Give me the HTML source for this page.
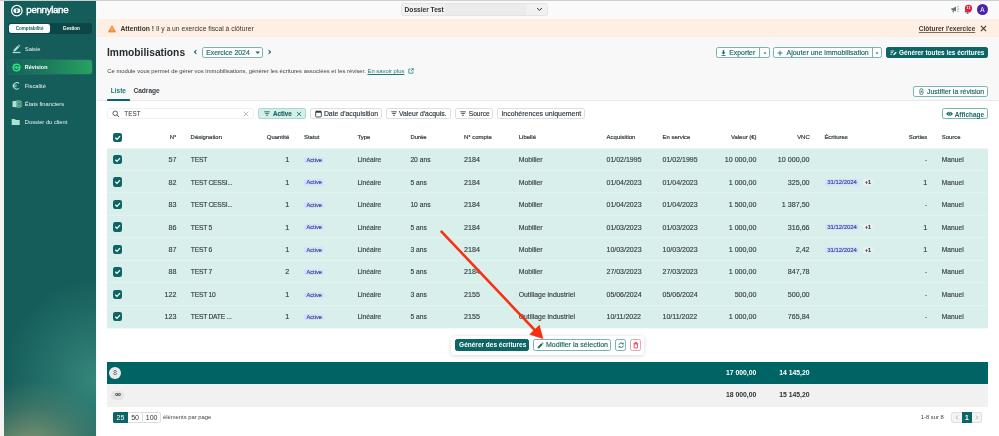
<!DOCTYPE html>
<html lang="fr">
<head>
<meta charset="utf-8">
<title>Immobilisations</title>
<style>
*{box-sizing:border-box;margin:0;padding:0}
html,body{width:999px;height:436px;overflow:hidden;background:#fff}
body{font-family:"Liberation Sans",sans-serif;color:#2b3338;position:relative;font-size:6.7px;-webkit-font-smoothing:antialiased}
.abs{position:absolute}
.t{position:absolute;white-space:nowrap;line-height:10px;height:10px}
.r{text-align:right}
/* frame */
#topline{left:0;top:0;width:999px;height:1px;background:#cfcfcf}
#leftstrip{left:0;top:1px;width:4px;height:435px;background:#f3f3f3}
#side{left:4px;top:1px;width:92.2px;height:435px;background:radial-gradient(ellipse 82px 78px at 30% 105%, rgba(130,150,114,0.97) 0%, rgba(124,147,112,0.8) 30%, rgba(115,142,110,0.35) 65%, rgba(110,140,110,0) 100%),radial-gradient(ellipse 92px 100px at 100% 87%, rgba(56,138,126,0.92) 0%, rgba(52,132,121,0.62) 40%, rgba(48,126,116,0) 100%),#155d5b}
#sidegap{left:96.2px;top:1px;width:1.2px;height:435px;background:#f3f5f5}
#topbar{left:97.4px;top:1px;width:901.6px;height:18px;background:#fafafa}
#banner{left:97.4px;top:18.7px;width:901.6px;height:18.6px;background:#fdefe3}
#head{left:97.4px;top:37.3px;width:901.6px;height:63px;background:#f8f8f8}
#headline{left:97.4px;top:100px;width:901.6px;height:0.8px;background:#e8e9ea}
/* sidebar */
.nav{position:absolute;left:24.8px;color:#e8f3f0;font-size:5.75px;line-height:10px;height:10px;white-space:nowrap}
#toggle{left:8.1px;top:23.2px;width:84.2px;height:10.6px;background:#0c4646;border-radius:2.5px}
#tg1{left:8.9px;top:24.2px;width:41.3px;height:8.9px;background:#fff;border-radius:2.2px;color:#155d5c;font-size:4.6px;font-weight:bold;text-align:center;line-height:9px}
#tg2{left:50.4px;top:24.2px;width:42px;height:8.9px;color:#fff;font-size:4.6px;font-weight:bold;text-align:center;line-height:9px}
#active{left:8.1px;top:60.2px;width:84.2px;height:14.1px;border-radius:2.5px;background:linear-gradient(90deg,#16625b 0%,#1b7a5c 45%,#27a162 100%);box-shadow:0 0 0 0.4px rgba(255,255,255,.12)}
/* buttons */
.btn{position:absolute;border:0.7px solid #78b5b2;border-radius:2.2px;background:#fff;color:#1b6867;font-size:6.9px;line-height:9px;white-space:nowrap;-webkit-text-stroke:0.16px currentColor}
.btn span{position:absolute;top:0.2px;white-space:nowrap}
.fbtn{position:absolute;-webkit-text-stroke:0.14px currentColor;border:0.8px solid #dcdfe1;border-radius:2px;background:#fff;color:#2b3338;font-size:6.9px;white-space:nowrap;height:11.6px;top:107.8px}
.fbtn span{position:absolute;top:0.6px;line-height:9px;white-space:nowrap}
/* table */
.hd{position:absolute;top:132.4px;font-size:5.95px;color:#3a4349;line-height:10px;white-space:nowrap;-webkit-text-stroke:0.22px #3a4349}
.row{position:absolute;left:107.4px;width:880.4px;height:22.45px;background:#d9efeb;border-bottom:0.7px solid #e1f3f0}
.row div{position:absolute;top:6.7px;line-height:10px;height:10px;white-space:nowrap;color:#333c41;font-size:6.7px;-webkit-text-stroke:0.14px #333c41}
.row div.num{font-size:7.15px}
.row div.date{font-size:7px}
.row div.des{letter-spacing:-0.22px}
.row div.lib{font-size:6.85px}
.row.last{border-bottom-color:#d9efeb;height:22.7px}
.cb{position:absolute;left:5.4px;top:6.5px !important;width:9.2px;height:9.4px !important;background:#0d6565;border-radius:2.2px}
.cb svg{position:absolute;left:0;top:0}
.badge{background:#d6e0fb;color:#2f49c5 !important;font-size:5.6px !important;-webkit-text-stroke:0.18px #2f49c5;border-radius:2.6px;padding:0 2.4px;line-height:6.4px !important;height:6.2px !important;top:8.4px !important}
.plus{background:#eceef0;color:#3a4349 !important;font-weight:bold;font-size:5.4px !important;border-radius:2.6px;padding:0 1.9px;line-height:6.4px !important;height:6.2px !important;top:8.4px !important}
</style>
</head>
<body>
<div id="wrap" style="position:absolute;left:0;top:0;width:999px;height:436px;will-change:transform">
<div class="abs" id="topline"></div>
<div class="abs" id="leftstrip"></div>
<div class="abs" id="side"></div>
<div class="abs" id="sidegap"></div>
<div class="abs" id="topbar"></div>
<div class="abs" id="banner"></div>
<div class="abs" id="head"></div>
<div class="abs" id="headline"></div>

<!-- SIDEBAR -->
<svg class="abs" style="left:10px;top:3.5px" width="14" height="14" viewBox="0 0 14 14">
  <circle cx="6.85" cy="6.7" r="5.25" fill="none" stroke="#fff" stroke-width="1.25"/>
  <ellipse cx="6.85" cy="6.7" rx="3.5" ry="2.35" fill="#fff"/>
  <rect x="6.2" y="4.9" width="1.3" height="3.6" rx="0.65" fill="#155d5c"/>
</svg>
<div class="t" style="left:26.3px;top:4.6px;color:#fff;font-size:9.8px;letter-spacing:-0.36px;-webkit-text-stroke:0.4px #fff" id="logo">pennylane</div>
<div class="abs" id="toggle"></div>
<div class="abs" id="tg1">Comptabilité</div>
<div class="abs" id="tg2">Gestion</div>

<div class="abs" id="active"></div>
<!-- saisie icon -->
<svg class="abs" style="left:11.8px;top:44.2px" width="10" height="10" viewBox="0 0 10 10">
  <path d="M1.7 5.7 L5.6 1.8 L7.1 3.3 L3.2 7.2 L1.4 7.5 Z" fill="#a9e4d0"/>
  <path d="M6.1 1.3 L6.8 0.6 L8.3 2.1 L7.6 2.8 Z" fill="#a9e4d0"/>
  <rect x="0.6" y="7.9" width="7.8" height="1.2" fill="#a9e4d0"/>
</svg>
<div class="nav" style="top:43.8px">Saisie</div>
<!-- revision icon -->
<svg class="abs" style="left:11.75px;top:62.9px" width="9" height="9" viewBox="0 0 9 9">
  <circle cx="4.5" cy="4.5" r="4.05" fill="#2fe47a"/>
  <path d="M2.5 4.3 A2.05 2.05 0 0 1 6 3.1 M6.5 4.7 A2.05 2.05 0 0 1 3 5.9" fill="none" stroke="#0f5a50" stroke-width="1"/>
  <path d="M6.8 1.9 L6.6 3.8 L4.9 3.4 Z M2.2 7.1 L2.4 5.2 L4.1 5.6 Z" fill="#0f5a50"/>
</svg>
<div class="nav" style="top:62.3px;color:#fff;font-weight:bold;font-size:5.45px">Révision</div>
<!-- fiscalite icon -->
<svg class="abs" style="left:12.2px;top:82px" width="8" height="8" viewBox="0 0 8 8"><path d="M6.9 1.5 A3.2 3.2 0 1 0 6.9 6.3" fill="none" stroke="#a9e4d0" stroke-width="1.05"/><path d="M0.5 3.1 H4.8 M0.5 4.7 H4.4" stroke="#a9e4d0" stroke-width="0.85"/></svg>
<div class="nav" style="top:80.5px">Fiscalité</div>
<!-- etats icon -->
<svg class="abs" style="left:11.6px;top:99.4px" width="10" height="10" viewBox="0 0 10 10">
  <path d="M0.5 2.3 L4.6 1.7 V8.3 L0.5 7.9 Z" fill="#a9e4d0"/>
  <path d="M5.2 1.7 L9 2.3 V7.9 L5.2 8.3 Z" fill="none" stroke="#a9e4d0" stroke-width="0.75"/>
  <rect x="6.1" y="3.3" width="2" height="0.65" fill="#a9e4d0"/><rect x="6.1" y="4.7" width="2" height="0.65" fill="#a9e4d0"/><rect x="6.1" y="6.1" width="2" height="0.65" fill="#a9e4d0"/>
</svg>
<div class="nav" style="top:98.8px">États financiers</div>
<!-- dossier icon -->
<svg class="abs" style="left:11.4px;top:117.4px" width="10" height="10" viewBox="0 0 10 10">
  <path d="M0.7 2 H3.9 L4.8 2.9 H8.7 V8 H0.7 Z" fill="#a9e4d0"/>
</svg>
<div class="nav" style="top:117.4px">Dossier du client</div>

<!-- TOPBAR -->
<div class="abs" style="left:400.5px;top:3.4px;width:147.5px;height:12.3px;background:#f1f1f1;border:0.6px solid #e4e4e4;border-radius:2.5px"></div>
<div class="abs" style="left:445px;top:4.2px;width:80.6px;height:10.6px;background:#ebebeb"></div>
<div class="t" style="left:404.6px;top:4.5px;font-size:6.6px;font-weight:bold;color:#2b3338" id="dossier">Dossier Test</div>
<svg class="abs" style="left:536px;top:7px" width="7" height="5" viewBox="0 0 7 5"><path d="M1.2 1 L3.5 3.4 L5.8 1" fill="none" stroke="#2b3338" stroke-width="1"/></svg>
<!-- megaphone -->
<svg class="abs" style="left:950.5px;top:6.3px" width="9" height="7" viewBox="0 0 9 7">
  <path d="M0.4 2.3 H2 L5 0.6 V5.6 L2 4 H0.4 Z" fill="#66737d"/>
  <rect x="1.6" y="4" width="1.3" height="2.4" fill="#66737d"/>
  <path d="M6.2 1.2 L7.6 0.5 M6.4 3.1 H8.2 M6.2 5 L7.6 5.7" stroke="#66737d" stroke-width="0.7"/>
</svg>
<!-- bell -->
<svg class="abs" style="left:963px;top:4px" width="11" height="11" viewBox="0 0 11 11">
  <path d="M1.6 8.4 C2.4 7.4 2.2 5.6 2.6 4.6 L6.6 4.6 C7 5.6 6.8 7.4 7.6 8.4 Z" fill="#66737d"/>
  <circle cx="4.6" cy="9.2" r="0.9" fill="#66737d"/>
  <circle cx="5.5" cy="4.4" r="3.6" fill="#e0213f"/>
</svg>
<div class="t" style="left:964.7px;top:3.4px;width:7.6px;text-align:center;font-size:3.6px;color:#fff;font-weight:bold;line-height:10px">11</div>
<div class="abs" style="left:976.8px;top:4px;width:11.4px;height:11.4px;border-radius:50%;background:#4a22a6"></div>
<div class="t" style="left:976.8px;top:4.7px;width:11.4px;text-align:center;font-size:6.4px;color:#fff">A</div>

<!-- BANNER -->
<svg class="abs" style="left:108.2px;top:24.6px" width="8" height="8" viewBox="0 0 8 8">
  <path d="M4 0.7 L7.5 7 H0.5 Z" fill="#ee8a35" stroke="#ee8a35" stroke-width="0.8" stroke-linejoin="round"/>
  <rect x="3.6" y="2.8" width="0.8" height="2.2" fill="#fdeee1"/><rect x="3.6" y="5.6" width="0.8" height="0.8" fill="#fdeee1"/>
</svg>
<div class="t" style="left:120.4px;top:23.7px;font-size:6.74px;color:#3b332d" id="att"><b>Attention !</b> Il y a un exercice fiscal à clôturer</div>
<div class="t" style="left:918.8px;top:23.6px;font-size:6.5px;color:#4a3423;font-weight:bold;text-decoration:underline;text-decoration-thickness:0.6px;text-underline-offset:0.5px;text-decoration-color:rgba(74,52,35,0.7)" id="clot">Clôturer l'exercice</div>
<svg class="abs" style="left:979.6px;top:25.3px" width="7" height="7" viewBox="0 0 7 7"><path d="M0.9 0.9 L6.1 6.1 M6.1 0.9 L0.9 6.1" stroke="#3b332d" stroke-width="1.05"/></svg>

<!-- HEADER -->
<div class="t" style="left:107.2px;top:44px;font-size:11.5px;font-weight:bold;color:#262d31;line-height:16px;height:16px;transform-origin:0 50%;transform:scaleX(0.892)" id="title">Immobilisations</div>
<svg class="abs" style="left:192.6px;top:49.3px" width="5" height="6" viewBox="0 0 5 6"><path d="M3.4 1.1 L1.5 3 L3.4 4.9" fill="none" stroke="#1b6867" stroke-width="1.1"/></svg>
<div class="btn" style="left:202.2px;top:47px;width:60.4px;height:10.8px"><span style="left:3px;font-size:6.88px;top:0.2px" id="exo">Exercice 2024</span>
  <svg style="position:absolute;left:51.6px;top:3.1px" width="5.4" height="4" viewBox="0 0 5.4 4"><path d="M0.4 0.6 H5 L2.7 3.1 Z" fill="#1b6867"/></svg></div>
<svg class="abs" style="left:267.4px;top:49.3px" width="5" height="6" viewBox="0 0 5 6"><path d="M1.6 1.1 L3.5 3 L1.6 4.9" fill="none" stroke="#1b6867" stroke-width="1.1"/></svg>

<!-- Exporter -->
<div class="btn" style="left:715.6px;top:47.2px;width:54.2px;height:10.8px">
  <svg style="position:absolute;left:4.7px;top:1.7px" width="5" height="6.4" viewBox="0 0 5 6.4"><path d="M1.7 0.3 H3.3 V2.4 H4.6 L2.5 4.6 L0.4 2.4 H1.7 Z" fill="#1b6867"/><rect x="0.5" y="5.2" width="4" height="0.9" fill="#1b6867"/></svg>
  <span style="left:12.6px" id="exp">Exporter</span>
  <i style="position:absolute;left:42.3px;top:0;width:0.7px;height:9.4px;background:#78b5b2"></i>
  <svg style="position:absolute;left:46px;top:3.7px" width="4" height="3" viewBox="0 0 4 3"><path d="M0.6 0.5 H3.4 L2 2.3 Z" fill="#1b6867"/></svg>
</div>
<!-- Ajouter -->
<div class="btn" style="left:773.3px;top:47.2px;width:108.8px;height:10.8px">
  <svg style="position:absolute;left:3.2px;top:2px" width="6" height="6" viewBox="0 0 6 6"><path d="M3 0.5 V5.5 M0.5 3 H5.5" stroke="#1b6867" stroke-width="0.85"/></svg>
  <span style="left:12.2px;font-size:7.03px" id="ajo">Ajouter une immobilisation</span>
  <i style="position:absolute;left:97.8px;top:0;width:0.7px;height:9.3px;background:#78b5b2"></i>
  <svg style="position:absolute;left:100.8px;top:3.7px" width="4" height="3" viewBox="0 0 4 3"><path d="M0.6 0.5 H3.4 L2 2.3 Z" fill="#1b6867"/></svg>
</div>
<!-- Generer toutes -->
<div class="btn" style="left:885.8px;top:47.2px;width:102.2px;height:10.8px;background:#0d6565;border-color:#0d6565;color:#fff;font-weight:bold;-webkit-text-stroke:0">
  <svg style="position:absolute;left:3.3px;top:2.2px" width="7" height="6" viewBox="0 0 7 6"><path d="M0.5 1 H4.2 M0.5 2.7 H3 M0.5 4.4 H2" stroke="#fff" stroke-width="0.8"/><path d="M3.2 5.3 L3.5 4.1 L5.8 1.8 L6.7 2.7 L4.4 5 Z" fill="#fff"/></svg>
  <span style="left:12.2px;font-size:6.43px" id="gen">Générer toutes les écritures</span>
</div>

<div class="t" style="left:107.3px;top:65.9px;font-size:5.87px;color:#3a4349" id="desc">Ce module vous permet de gérer vos immobilisations, générer les écritures associées et les réviser. <span style="color:#1b7a78;text-decoration:underline;text-decoration-thickness:0.5px;text-underline-offset:0.6px">En savoir plus</span></div>
<svg class="abs" style="left:407.6px;top:67.8px" width="6" height="6" viewBox="0 0 6 6"><path d="M2.6 1 H0.8 V5.2 H5 V3.4 M3.4 0.7 H5.3 V2.6 M5.3 0.7 L2.8 3.2" fill="none" stroke="#1b7a78" stroke-width="0.7"/></svg>

<!-- tabs -->
<div class="t" style="left:110.8px;top:86.2px;font-size:6.5px;font-weight:bold;color:#157d7a" id="tab1">Liste</div>
<div class="t" style="left:133.4px;top:86.2px;font-size:6.6px;font-weight:bold;color:#3a4349" id="tab2">Cadrage</div>
<div class="abs" style="left:107.4px;top:98.8px;width:22.2px;height:1.8px;background:#0d6565;border-radius:1px 1px 0 0"></div>
<!-- Justifier -->
<div class="btn" style="left:913.4px;top:85.8px;width:74.6px;height:10.8px">
  <svg style="position:absolute;left:4.7px;top:1.4px" width="5" height="7" viewBox="0 0 5 7"><path d="M0.9 4.4 V2.1 A1.5 1.5 0 0 1 3.9 2.1 V5.1 A1.5 1.5 0 0 1 0.9 5.1 V4.2 M2.4 2.6 V4.8" fill="none" stroke="#1b6867" stroke-width="0.75"/></svg>
  <span style="left:12.5px;font-size:6.98px" id="jus">Justifier la révision</span>
</div>

<!-- FILTER BAR -->
<div class="abs" style="left:107.4px;top:107.8px;width:147px;height:11.6px;border:0.8px solid #eef0f0;border-radius:2.5px;background:#fff"></div>
<svg class="abs" style="left:111.8px;top:109.7px" width="8" height="8" viewBox="0 0 8 8"><circle cx="3.2" cy="3.3" r="2.3" fill="none" stroke="#4a545a" stroke-width="0.9"/><path d="M4.9 5 L7 7.1" stroke="#4a545a" stroke-width="1"/></svg>
<div class="t" style="left:124.3px;top:108.6px;font-size:6.35px;color:#2b3338" id="srch">TEST</div>
<svg class="abs" style="left:243.4px;top:110.6px" width="6" height="6" viewBox="0 0 6 6"><path d="M0.6 0.6 L5.4 5.4 M5.4 0.6 L0.6 5.4" stroke="#9aa2a7" stroke-width="0.7"/></svg>

<div class="fbtn" style="left:258.2px;width:47.8px;background:#d5eee9;border-color:#a9d9d1;color:#1b6867">
  <svg style="position:absolute;left:4.9px;top:2.6px" width="6" height="5.4" viewBox="0 0 6 5.4"><path d="M0.2 0.8 H5.8 M1.2 2.6 H4.8 M2.2 4.4 H3.8" stroke="#1b6867" stroke-width="0.9"/></svg>
  <span style="left:13.7px;font-weight:bold;font-size:6.27px" id="act">Active</span>
  <svg style="position:absolute;left:36.8px;top:2.4px" width="6" height="6" viewBox="0 0 6 6"><path d="M0.9 0.9 L5.1 5.1 M5.1 0.9 L0.9 5.1" stroke="#1b6867" stroke-width="0.8"/></svg>
</div>
<div class="fbtn" style="left:309.8px;width:72px">
  <svg style="position:absolute;left:4.2px;top:1.6px" width="7" height="7.6" viewBox="0 0 7 7.6"><rect x="0.7" y="1.4" width="5.6" height="5.6" rx="0.7" fill="none" stroke="#2b3338" stroke-width="0.85"/><rect x="0.7" y="1.2" width="5.6" height="1.5" fill="#2b3338"/><path d="M2 0.3 V1.6 M5 0.3 V1.6" stroke="#2b3338" stroke-width="0.8"/></svg>
  <span style="left:13.1px" id="dat">Date d'acquisition</span>
</div>
<div class="fbtn" style="left:385.5px;width:65.2px">
  <svg style="position:absolute;left:4.6px;top:2.6px" width="6" height="5.4" viewBox="0 0 6 5.4"><path d="M0.2 0.8 H5.8 M1.2 2.6 H4.8 M2.2 4.4 H3.8" stroke="#3a4349" stroke-width="0.9"/></svg>
  <span style="left:12.5px;font-size:6.8px" id="val">Valeur d'acquis.</span>
</div>
<div class="fbtn" style="left:454.9px;width:38.6px">
  <svg style="position:absolute;left:4.6px;top:2.6px" width="6" height="5.4" viewBox="0 0 6 5.4"><path d="M0.2 0.8 H5.8 M1.2 2.6 H4.8 M2.2 4.4 H3.8" stroke="#3a4349" stroke-width="0.9"/></svg>
  <span style="left:12.9px;font-size:6.62px" id="src">Source</span>
</div>
<div class="fbtn" style="left:496.9px;width:88px">
  <span style="left:3.5px;font-size:6.95px" id="inc">Incohérences uniquement</span>
</div>
<!-- Affichage -->
<div class="btn" style="left:941.5px;top:108.1px;width:46.3px;height:11.3px">
  <svg style="position:absolute;left:3.4px;top:2.3px" width="7" height="5.6" viewBox="0 0 7 5.6"><path d="M0.2 2.8 C1.5 0.1 5.5 0.1 6.8 2.8 C5.5 5.5 1.5 5.5 0.2 2.8 Z" fill="#1b6867"/><circle cx="3.5" cy="2.8" r="1.25" fill="none" stroke="#cfe6e3" stroke-width="0.55"/></svg>
  <span style="left:12.2px;top:0.7px;font-weight:bold;font-size:6.45px;-webkit-text-stroke:0" id="aff">Affichage</span>
</div>

<!-- TABLE HEADER -->
<div class="abs cb" style="left:112.7px;top:132.8px !important"><svg width="9.2" height="9.4" viewBox="0.2 0.1 9.2 9.4"><path d="M2.5 4.9 L4.2 6.5 L7.2 3.2" fill="none" stroke="#fff" stroke-width="1.25"/></svg></div>
<div class="hd r" style="left:150px;width:26.4px">N°</div>
<div class="hd" style="left:190.6px">Désignation</div>
<div class="hd r" style="left:250px;width:39.3px">Quantité</div>
<div class="hd" style="left:304px">Statut</div>
<div class="hd" style="left:357.4px">Type</div>
<div class="hd" style="left:410.4px">Durée</div>
<div class="hd" style="left:464px">N° compte</div>
<div class="hd" style="left:518.8px">Libellé</div>
<div class="hd" style="left:606.6px">Acquisition</div>
<div class="hd" style="left:662.6px">En service</div>
<div class="hd r" style="left:700px;width:56.6px">Valeur (€)</div>
<div class="hd r" style="left:770px;width:39.7px">VNC</div>
<div class="hd" style="left:824.4px">Écritures</div>
<div class="hd r" style="left:890px;width:37.3px">Sorties</div>
<div class="hd" style="left:941.8px">Source</div>

<!-- ROWS -->
<div id="rows">
<div class="row" style="top:148.50px"><div class="cb"><svg width="9.2" height="9.4" viewBox="0.2 0.1 9.2 9.4"><path d="M2.5 4.9 L4.2 6.5 L7.2 3.2" fill="none" stroke="#fff" stroke-width="1.25"/></svg></div><div class="num" style="left:9.0px;width:60px;text-align:right">57</div><div class="des" style="left:83.4px">TEST</div><div class="num" style="left:121.8px;width:60px;text-align:right">1</div><div class="badge" style="left:196.8px">Active</div><div style="left:250.0px">Linéaire</div><div style="left:303.0px">20 ans</div><div class="num" style="left:356.6px">2184</div><div class="lib" style="left:411.3px">Mobilier</div><div class="date" style="left:499.1px">01/02/1995</div><div class="date" style="left:555.2px">01/02/1995</div><div class="num" style="left:589.1px;width:60px;text-align:right">10 000,00</div><div class="num" style="left:642.2px;width:60px;text-align:right">10 000,00</div><div class="num" style="left:759.8px;width:60px;text-align:right">-</div><div style="left:834.4px">Manuel</div></div>
<div class="row" style="top:170.94px"><div class="cb"><svg width="9.2" height="9.4" viewBox="0.2 0.1 9.2 9.4"><path d="M2.5 4.9 L4.2 6.5 L7.2 3.2" fill="none" stroke="#fff" stroke-width="1.25"/></svg></div><div class="num" style="left:9.0px;width:60px;text-align:right">82</div><div class="des" style="left:83.4px">TEST CESSI...</div><div class="num" style="left:121.8px;width:60px;text-align:right">1</div><div class="badge" style="left:196.8px">Active</div><div style="left:250.0px">Linéaire</div><div style="left:303.0px">5 ans</div><div class="num" style="left:356.6px">2184</div><div class="lib" style="left:411.3px">Mobilier</div><div class="date" style="left:499.1px">01/04/2023</div><div class="date" style="left:555.2px">01/04/2023</div><div class="num" style="left:589.1px;width:60px;text-align:right">1 000,00</div><div class="num" style="left:642.2px;width:60px;text-align:right">325,00</div><div class="badge" style="left:717.4px" ><span style="font-size:5.95px">31/12/2024</span></div><div class="plus" style="left:755.6px">+1</div><div class="num" style="left:759.8px;width:60px;text-align:right">1</div><div style="left:834.4px">Manuel</div></div>
<div class="row" style="top:193.38px"><div class="cb"><svg width="9.2" height="9.4" viewBox="0.2 0.1 9.2 9.4"><path d="M2.5 4.9 L4.2 6.5 L7.2 3.2" fill="none" stroke="#fff" stroke-width="1.25"/></svg></div><div class="num" style="left:9.0px;width:60px;text-align:right">83</div><div class="des" style="left:83.4px">TEST CESSI...</div><div class="num" style="left:121.8px;width:60px;text-align:right">1</div><div class="badge" style="left:196.8px">Active</div><div style="left:250.0px">Linéaire</div><div style="left:303.0px">10 ans</div><div class="num" style="left:356.6px">2184</div><div class="lib" style="left:411.3px">Mobilier</div><div class="date" style="left:499.1px">01/04/2023</div><div class="date" style="left:555.2px">01/04/2023</div><div class="num" style="left:589.1px;width:60px;text-align:right">1 500,00</div><div class="num" style="left:642.2px;width:60px;text-align:right">1 387,50</div><div class="num" style="left:759.8px;width:60px;text-align:right">-</div><div style="left:834.4px">Manuel</div></div>
<div class="row" style="top:215.82px"><div class="cb"><svg width="9.2" height="9.4" viewBox="0.2 0.1 9.2 9.4"><path d="M2.5 4.9 L4.2 6.5 L7.2 3.2" fill="none" stroke="#fff" stroke-width="1.25"/></svg></div><div class="num" style="left:9.0px;width:60px;text-align:right">86</div><div class="des" style="left:83.4px">TEST 5</div><div class="num" style="left:121.8px;width:60px;text-align:right">1</div><div class="badge" style="left:196.8px">Active</div><div style="left:250.0px">Linéaire</div><div style="left:303.0px">5 ans</div><div class="num" style="left:356.6px">2184</div><div class="lib" style="left:411.3px">Mobilier</div><div class="date" style="left:499.1px">01/03/2023</div><div class="date" style="left:555.2px">01/03/2023</div><div class="num" style="left:589.1px;width:60px;text-align:right">1 000,00</div><div class="num" style="left:642.2px;width:60px;text-align:right">316,66</div><div class="badge" style="left:717.4px" ><span style="font-size:5.95px">31/12/2024</span></div><div class="plus" style="left:755.6px">+1</div><div class="num" style="left:759.8px;width:60px;text-align:right">1</div><div style="left:834.4px">Manuel</div></div>
<div class="row" style="top:238.26px"><div class="cb"><svg width="9.2" height="9.4" viewBox="0.2 0.1 9.2 9.4"><path d="M2.5 4.9 L4.2 6.5 L7.2 3.2" fill="none" stroke="#fff" stroke-width="1.25"/></svg></div><div class="num" style="left:9.0px;width:60px;text-align:right">87</div><div class="des" style="left:83.4px">TEST 6</div><div class="num" style="left:121.8px;width:60px;text-align:right">1</div><div class="badge" style="left:196.8px">Active</div><div style="left:250.0px">Linéaire</div><div style="left:303.0px">3 ans</div><div class="num" style="left:356.6px">2184</div><div class="lib" style="left:411.3px">Mobilier</div><div class="date" style="left:499.1px">10/03/2023</div><div class="date" style="left:555.2px">10/03/2023</div><div class="num" style="left:589.1px;width:60px;text-align:right">1 000,00</div><div class="num" style="left:642.2px;width:60px;text-align:right">2,42</div><div class="badge" style="left:717.4px" ><span style="font-size:5.95px">31/12/2024</span></div><div class="plus" style="left:755.6px">+1</div><div class="num" style="left:759.8px;width:60px;text-align:right">1</div><div style="left:834.4px">Manuel</div></div>
<div class="row" style="top:260.70px"><div class="cb"><svg width="9.2" height="9.4" viewBox="0.2 0.1 9.2 9.4"><path d="M2.5 4.9 L4.2 6.5 L7.2 3.2" fill="none" stroke="#fff" stroke-width="1.25"/></svg></div><div class="num" style="left:9.0px;width:60px;text-align:right">88</div><div class="des" style="left:83.4px">TEST 7</div><div class="num" style="left:121.8px;width:60px;text-align:right">2</div><div class="badge" style="left:196.8px">Active</div><div style="left:250.0px">Linéaire</div><div style="left:303.0px">5 ans</div><div class="num" style="left:356.6px">2184</div><div class="lib" style="left:411.3px">Mobilier</div><div class="date" style="left:499.1px">27/03/2023</div><div class="date" style="left:555.2px">27/03/2023</div><div class="num" style="left:589.1px;width:60px;text-align:right">1 000,00</div><div class="num" style="left:642.2px;width:60px;text-align:right">847,78</div><div class="num" style="left:759.8px;width:60px;text-align:right">-</div><div style="left:834.4px">Manuel</div></div>
<div class="row" style="top:283.14px"><div class="cb"><svg width="9.2" height="9.4" viewBox="0.2 0.1 9.2 9.4"><path d="M2.5 4.9 L4.2 6.5 L7.2 3.2" fill="none" stroke="#fff" stroke-width="1.25"/></svg></div><div class="num" style="left:9.0px;width:60px;text-align:right">122</div><div class="des" style="left:83.4px">TEST 10</div><div class="num" style="left:121.8px;width:60px;text-align:right">1</div><div class="badge" style="left:196.8px">Active</div><div style="left:250.0px">Linéaire</div><div style="left:303.0px">3 ans</div><div class="num" style="left:356.6px">2155</div><div class="lib" style="left:411.3px">Outillage industriel</div><div class="date" style="left:499.1px">05/06/2024</div><div class="date" style="left:555.2px">05/06/2024</div><div class="num" style="left:589.1px;width:60px;text-align:right">500,00</div><div class="num" style="left:642.2px;width:60px;text-align:right">500,00</div><div class="num" style="left:759.8px;width:60px;text-align:right">-</div><div style="left:834.4px">Manuel</div></div>
<div class="row last" style="top:305.58px"><div class="cb"><svg width="9.2" height="9.4" viewBox="0.2 0.1 9.2 9.4"><path d="M2.5 4.9 L4.2 6.5 L7.2 3.2" fill="none" stroke="#fff" stroke-width="1.25"/></svg></div><div class="num" style="left:9.0px;width:60px;text-align:right">123</div><div class="des" style="left:83.4px">TEST DATE ...</div><div class="num" style="left:121.8px;width:60px;text-align:right">1</div><div class="badge" style="left:196.8px">Active</div><div style="left:250.0px">Linéaire</div><div style="left:303.0px">5 ans</div><div class="num" style="left:356.6px">2155</div><div class="lib" style="left:411.3px">Outillage industriel</div><div class="date" style="left:499.1px">10/11/2022</div><div class="date" style="left:555.2px">10/11/2022</div><div class="num" style="left:589.1px;width:60px;text-align:right">1 000,00</div><div class="num" style="left:642.2px;width:60px;text-align:right">765,84</div><div class="num" style="left:759.8px;width:60px;text-align:right">-</div><div style="left:834.4px">Manuel</div></div>
</div><!--endrows-->

<div class="abs" style="left:107px;top:148px;width:881px;height:1px;background:rgba(217,239,235,0.5)"></div>
<div class="abs" style="left:107px;top:328px;width:881px;height:1px;background:rgba(217,239,235,0.35)"></div>
<!-- FLOATING BAR -->
<div class="abs" style="left:451px;top:335.5px;width:192.8px;height:19px;background:#fff;border-radius:3.5px;box-shadow:0 0.8px 4.5px rgba(40,50,60,.20)"></div>
<div class="btn" style="left:454.8px;top:339.4px;width:74px;height:11.2px;background:#0d6565;border-color:#0d6565;color:#fff;font-weight:bold;-webkit-text-stroke:0"><span style="left:3.3px;top:-0.5px;font-size:6.5px" id="gde">Générer des écritures</span></div>
<div class="btn" style="left:532.5px;top:339.4px;width:78.8px;height:11.2px">
  <svg style="position:absolute;left:3.8px;top:1.6px" width="7" height="7" viewBox="0 0 7 7"><path d="M0.6 6.4 L0.9 4.7 L4.3 1.3 L5.7 2.7 L2.3 6.1 Z M4.8 0.8 L5.3 0.3 L6.7 1.7 L6.2 2.2 Z" fill="#1b6867"/></svg>
  <span style="left:12.5px;top:-0.5px;font-size:7.02px" id="mod">Modifier la sélection</span>
</div>
<div class="btn" style="left:615px;top:339.4px;width:11px;height:11.2px">
  <svg style="position:absolute;left:1.7px;top:1.7px" width="6.4" height="6.4" viewBox="0 0 6.4 6.4"><path d="M1 2.7 A2.3 2.3 0 0 1 5 1.8 M5.4 3.7 A2.3 2.3 0 0 1 1.4 4.6" fill="none" stroke="#1b6867" stroke-width="0.95"/><path d="M5.7 0.5 L5.6 2.5 L3.8 2.2 Z M0.7 5.9 L0.8 3.9 L2.6 4.2 Z" fill="#1b6867"/></svg>
</div>
<div class="btn" style="left:629.5px;top:339.4px;width:11px;height:11.2px;border-color:#eda3ad">
  <svg style="position:absolute;left:2px;top:1.6px" width="5.6" height="6.6" viewBox="0 0 5.6 6.6"><path d="M0.5 1.4 H5.1 M1.9 1.2 V0.5 H3.7 V1.2" fill="none" stroke="#dc3a50" stroke-width="0.75"/><path d="M1.1 2 H4.5 V5.6 Q4.5 6 4.1 6 H1.5 Q1.1 6 1.1 5.6 Z" fill="none" stroke="#dc3a50" stroke-width="0.85"/></svg>
</div>

<!-- FOOTERS -->
<div class="abs" style="left:107.4px;top:361.6px;width:880.4px;height:22.6px;background:#006464"></div>
<div class="abs" style="left:107.4px;top:384.2px;width:880.4px;height:22.4px;background:#f1f1f1"></div>
<div class="abs" style="left:109.3px;top:367px;width:11.8px;height:11.8px;border-radius:50%;background:#e9ebeb"></div>
<div class="t" style="left:109.3px;top:368px;width:11.8px;text-align:center;font-size:6.6px;color:#4a545a">8</div>
<div class="abs" style="left:111.3px;top:390.6px;width:13.1px;height:9.4px;border-radius:4.7px;background:#e3e4e6"></div>
<div class="t" style="left:111.3px;top:390.3px;width:13.1px;text-align:center;font-size:8.2px;color:#2b3338;font-weight:bold">∞</div>
<div class="t r" style="left:700px;width:56.4px;top:367.9px;font-size:6.85px;font-weight:bold;color:#fff" id="f1">17 000,00</div>
<div class="t r" style="left:760px;width:49.6px;top:367.9px;font-size:6.85px;font-weight:bold;color:#fff">14 145,20</div>
<div class="t r" style="left:700px;width:56.4px;top:390.2px;font-size:6.85px;font-weight:bold;color:#2b3338">18 000,00</div>
<div class="t r" style="left:760px;width:49.6px;top:390.2px;font-size:6.85px;font-weight:bold;color:#2b3338">15 145,20</div>

<!-- PAGINATION -->
<div class="abs" style="left:113.2px;top:412.3px;width:47.4px;height:10.4px;border:0.6px solid #dcdfe0;border-radius:1.6px;background:#fff"></div>
<div class="abs" style="left:113.2px;top:412.3px;width:14.6px;height:10.4px;background:#0d6565;border-radius:1.6px 0 0 1.6px"></div>
<div class="abs" style="left:142.2px;top:412.3px;width:0.6px;height:10.4px;background:#dcdfe0"></div>
<div class="t" style="left:113.2px;top:413px;width:14.6px;text-align:center;font-size:7px;color:#fff">25</div>
<div class="t" style="left:127.8px;top:413px;width:14.6px;text-align:center;font-size:7px;color:#2b3338">50</div>
<div class="t" style="left:142.6px;top:413px;width:18px;text-align:center;font-size:7px;color:#2b3338">100</div>
<div class="t" style="left:163px;top:411.9px;font-size:5.82px;color:#3a4349" id="epp">éléments par page</div>

<div class="t" style="left:920.8px;top:412.4px;font-size:5.85px;color:#3a4349" id="sur">1-8 sur 8</div>
<div class="abs" style="left:951.3px;top:412px;width:31.2px;height:10.8px;border:0.6px solid #dde0e4;border-radius:2px;background:#f3f4f5"></div>
<div class="abs" style="left:962px;top:412px;width:10px;height:10.8px;background:#0d6565"></div>
<div class="t" style="left:962px;top:412.6px;width:10px;text-align:center;font-size:6.8px;color:#fff;font-weight:bold">1</div>
<svg class="abs" style="left:954.8px;top:415px" width="4" height="5" viewBox="0 0 4 5"><path d="M2.9 0.6 L1.2 2.5 L2.9 4.4" fill="none" stroke="#8b949a" stroke-width="0.7"/></svg>
<svg class="abs" style="left:975.2px;top:415px" width="4" height="5" viewBox="0 0 4 5"><path d="M1.1 0.6 L2.8 2.5 L1.1 4.4" fill="none" stroke="#8b949a" stroke-width="0.7"/></svg>

<!-- RED ARROW -->
<svg class="abs" style="left:0;top:0" width="999" height="436" viewBox="0 0 999 436">
  <path d="M440.8 230.9 L536 331.3" stroke="#f8300f" stroke-width="2.6" fill="none"/>
  <path d="M543.3 339 L529.3 334.4 L539.5 324.7 Z" fill="#f8300f"/>
</svg>
</div>
</body>
</html>
